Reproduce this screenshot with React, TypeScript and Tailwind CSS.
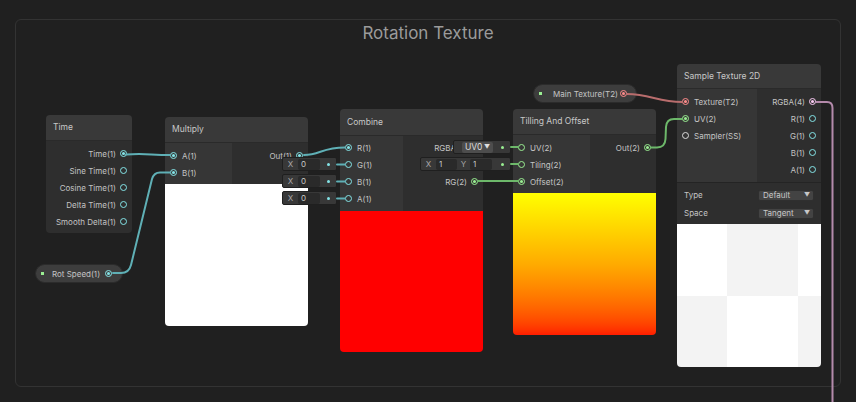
import type { ReactNode } from "react";

type Kind = "float" | "vec2" | "vec4" | "tex" | "ss";

const ring: Record<Kind, string> = {
  float: "border-[#84e4e7]",
  vec2: "border-[#9aef92]",
  vec4: "border-[#fbcbf4]",
  tex: "border-[#ff8b8b]",
  ss: "border-[#dcdcdc]",
};

const fill: Record<Kind, string> = {
  float: "bg-[#84e4e7]",
  vec2: "bg-[#9aef92]",
  vec4: "bg-[#fbcbf4]",
  tex: "bg-[#ff8b8b]",
  ss: "bg-[#dcdcdc]",
};

function Port({ kind, on }: { kind: Kind; on?: boolean }) {
  return (
    <span
      className={`flex h-[7px] w-[7px] shrink-0 items-center justify-center rounded-full border-[1.5px] ${ring[kind]}`}
    >
      {on ? <span className={`h-[3px] w-[3px] rounded-full ${fill[kind]}`} /> : null}
    </span>
  );
}

function InRow({ label, kind, on }: { label: string; kind: Kind; on?: boolean }) {
  return (
    <div className="flex h-[17px] items-center gap-[5px] pl-[5px] whitespace-nowrap">
      <Port kind={kind} on={on} />
      <span className="leading-none">{label}</span>
    </div>
  );
}

function OutRow({ label, kind, on }: { label: string; kind: Kind; on?: boolean }) {
  return (
    <div className="flex h-[17px] items-center justify-end gap-[4px] pr-[5px] whitespace-nowrap">
      <span className="leading-none">{label}</span>
      <Port kind={kind} on={on} />
    </div>
  );
}

function Header({ title, h }: { title: string; h: string }) {
  return (
    <div className={`flex ${h} items-center border-b border-[#2a2a2a] bg-[#393939] px-[7px] text-[8.5px] text-[#c8c8c8]`}>
      {title}
    </div>
  );
}

function Node({ className, children }: { className: string; children: ReactNode }) {
  return <div className={`absolute flex flex-col overflow-hidden rounded-[4px] ${className}`}>{children}</div>;
}

function Dropdown({ value }: { value: string }) {
  return (
    <div className="flex h-[11px] w-[56px] items-center justify-between rounded-[2px] border border-[#2f2f2f] bg-[#434343] pl-[4px] pr-[3px] text-[8px] leading-none text-[#c8c8c8]">
      <span>{value}</span>
      <span className="text-[6px]">▼</span>
    </div>
  );
}

function VecField({ top, value }: { top: string; value: string }) {
  return (
    <div
      className={`absolute left-[282px] ${top} flex h-[14px] w-[55px] items-center rounded-[2px] border border-[#1f1f1f] bg-[#383838] pr-[6px]`}
    >
      <span className="w-[15px] text-center leading-none text-[#a8a8a8]">X</span>
      <span className="h-[11px] w-[22px] rounded-[2px] bg-[#2a2a2a] pl-[3px] leading-[11px] text-[#c8c8c8]">{value}</span>
      <span className="ml-auto h-[3px] w-[3px] rounded-full bg-[#84e4e7]" />
    </div>
  );
}

export default function App() {
  return (
    <div className="relative h-[402px] w-[856px] overflow-hidden bg-[#202020] font-['Inter',sans-serif] text-[8px] text-[#c4c4c4]">
      {/* group */}
      <div className="absolute left-[15px] top-[19px] flex h-[368px] w-[826px] justify-center rounded-[6px] border border-[#333333]">
        <span className="mt-[2px] text-[17px] leading-[22px] text-[#9b9b9b]">Rotation Texture</span>
      </div>

      {/* Time */}
      <Node className="left-[46px] top-[115px] w-[86px]">
        <Header title="Time" h="h-[26px]" />
        <div className="bg-[#2e2e2e] pb-[3px] pt-[4px]">
          <OutRow label="Time(1)" kind="float" on />
          <OutRow label="Sine Time(1)" kind="float" />
          <OutRow label="Cosine Time(1)" kind="float" />
          <OutRow label="Delta Time(1)" kind="float" />
          <OutRow label="Smooth Delta(1)" kind="float" />
        </div>
      </Node>

      {/* Multiply */}
      <Node className="left-[165px] top-[117px] w-[143px]">
        <Header title="Multiply" h="h-[26px]" />
        <div className="flex">
          <div className="w-[67px] bg-[#363636] pb-[3px] pt-[4px]">
            <InRow label="A(1)" kind="float" on />
            <InRow label="B(1)" kind="float" on />
          </div>
          <div className="flex-1 bg-[#2e2e2e] pt-[4px]">
            <OutRow label="Out(1)" kind="float" on />
          </div>
        </div>
        <div className="h-[142px] bg-white" />
      </Node>

      {/* Combine */}
      <Node className="left-[340px] top-[109px] w-[143px]">
        <Header title="Combine" h="h-[27px]" />
        <div className="flex">
          <div className="w-[63px] bg-[#363636] pb-[4px] pt-[3px]">
            <InRow label="R(1)" kind="float" on />
            <InRow label="G(1)" kind="float" />
            <InRow label="B(1)" kind="float" />
            <InRow label="A(1)" kind="float" />
          </div>
          <div className="flex-1 bg-[#2e2e2e] pt-[3px]">
            <OutRow label="RGBA(4)" kind="vec4" />
            <OutRow label="RGB(3)" kind="vec4" />
            <OutRow label="RG(2)" kind="vec2" on />
          </div>
        </div>
        <div className="h-[141px] bg-[#ff0000]" />
      </Node>

      {/* Tilling And Offset */}
      <Node className="left-[513px] top-[109px] w-[143px]">
        <Header title="Tilling And Offset" h="h-[26px]" />
        <div className="flex">
          <div className="w-[77px] bg-[#363636] pb-[3px] pt-[4px]">
            <InRow label="UV(2)" kind="vec2" />
            <InRow label="Tiling(2)" kind="vec2" />
            <InRow label="Offset(2)" kind="vec2" on />
          </div>
          <div className="flex-1 bg-[#2e2e2e] pt-[4px]">
            <OutRow label="Out(2)" kind="vec2" on />
          </div>
        </div>
        <div className="h-[142px] bg-linear-to-b from-[#ffff00] via-[#ffab00] to-[#ff1c00]" />
      </Node>

      {/* Sample Texture 2D */}
      <Node className="left-[677px] top-[64px] w-[144px]">
        <Header title="Sample Texture 2D" h="h-[25px]" />
        <div className="flex">
          <div className="w-[80px] bg-[#363636] pt-[4px]">
            <InRow label="Texture(T2)" kind="tex" on />
            <InRow label="UV(2)" kind="vec2" on />
            <InRow label="Sampler(SS)" kind="ss" />
          </div>
          <div className="flex-1 bg-[#2e2e2e] pb-[4px] pt-[4px]">
            <OutRow label="RGBA(4)" kind="vec4" on />
            <OutRow label="R(1)" kind="float" />
            <OutRow label="G(1)" kind="float" />
            <OutRow label="B(1)" kind="float" />
            <OutRow label="A(1)" kind="float" />
          </div>
        </div>
        <div className="border-t border-[#242424] bg-[#2e2e2e] px-[7px] pb-[2px] pt-[3px]">
          <div className="flex h-[18px] items-center justify-between">
            <span>Type</span>
            <Dropdown value="Default" />
          </div>
          <div className="flex h-[18px] items-center justify-between">
            <span>Space</span>
            <Dropdown value="Tangent" />
          </div>
        </div>
        <div className="grid h-[143px] grid-cols-[50px_71px_1fr] grid-rows-2">
          <div className="bg-white" />
          <div className="bg-[#f3f3f3]" />
          <div className="bg-white" />
          <div className="bg-[#f3f3f3]" />
          <div className="bg-white" />
          <div className="bg-[#f3f3f3]" />
        </div>
      </Node>

      {/* properties */}
      <div className="absolute left-[533px] top-[84px] flex h-[19px] w-[104px] items-center rounded-full border border-[#2b2b2b] bg-[#3d3d3d] pl-[5px] pr-[9px] whitespace-nowrap">
        <span className="h-[3px] w-[3px] bg-[#9aef92]" />
        <span className="ml-[11px]">Main Texture(T2)</span>
        <span className="ml-auto">
          <Port kind="tex" on />
        </span>
      </div>
      <div className="absolute left-[35px] top-[264px] flex h-[19px] w-[88px] items-center rounded-full border border-[#2b2b2b] bg-[#3d3d3d] pl-[5px] pr-[10px] whitespace-nowrap">
        <span className="h-[3px] w-[3px] bg-[#9aef92]" />
        <span className="ml-[8px]">Rot Speed(1)</span>
        <span className="ml-auto">
          <Port kind="float" on />
        </span>
      </div>

      {/* inline input fields */}
      <VecField top="top-[157px]" value="0" />
      <VecField top="top-[174px]" value="0" />
      <VecField top="top-[191px]" value="0" />

      <div className="absolute left-[453px] top-[140px] flex h-[14px] w-[58px] items-center rounded-[2px] border border-[#1f1f1f] bg-[#383838] pl-[8px] pr-[6px]">
        <span className="flex h-[11px] w-[31px] items-center justify-between rounded-[2px] bg-[#4d4d4d] px-[3px] text-[8.5px] leading-none text-[#dedede]">
          <span>UV0</span>
          <span className="text-[6px]">▼</span>
        </span>
        <span className="ml-auto h-[3px] w-[3px] rounded-full bg-[#9aef92]" />
      </div>

      <div className="absolute left-[420px] top-[157px] flex h-[14px] w-[91px] items-center rounded-[2px] border border-[#1f1f1f] bg-[#383838] pr-[6px]">
        <span className="w-[15px] text-center leading-none text-[#a8a8a8]">X</span>
        <span className="h-[11px] w-[21px] rounded-[2px] bg-[#2a2a2a] pl-[3px] leading-[11px] text-[#c8c8c8]">1</span>
        <span className="w-[13px] text-center leading-none text-[#a8a8a8]">Y</span>
        <span className="h-[11px] w-[22px] rounded-[2px] bg-[#2a2a2a] pl-[3px] leading-[11px] text-[#c8c8c8]">1</span>
        <span className="ml-auto h-[3px] w-[3px] rounded-full bg-[#9aef92]" />
      </div>

      {/* edges */}
      <svg className="pointer-events-none absolute left-0 top-0 h-[402px] w-[856px]" viewBox="0 0 856 402" fill="none">
        <g stroke="#5fb0b6" strokeWidth="2" strokeLinecap="round">
          <path d="M126 154.5 C145 153 150 155 170 155" />
          <path d="M113 273 L121 273 Q129 273 131 265 L152 179 Q154 172.5 160 172.5 L170 172.5" />
          <path d="M304 155 C320 155 322 147.5 345 147.5" />
          <path d="M337 164.5 L345 164.5" />
          <path d="M337 181.5 L345 181.5" />
          <path d="M337 198.5 L345 198.5" />
        </g>
        <g stroke="#6db86a" strokeWidth="2" strokeLinecap="round">
          <path d="M478 181 L518 181" />
          <path d="M511 147 L518 147" />
          <path d="M511 164 L518 164" />
          <path d="M651 147.5 L657 147.5 Q665 147.5 665.5 139 L666 127 Q666.5 119 674 119 L682 119" />
        </g>
        <path d="M627 94 C650 94 658 102 682 102" stroke="#b96d6d" strokeWidth="2" strokeLinecap="round" />
        <path d="M816 102 L827 102 Q832.5 102 832.5 108 L832.5 402" stroke="#b48aab" strokeWidth="2" />
      </svg>
    </div>
  );
}
